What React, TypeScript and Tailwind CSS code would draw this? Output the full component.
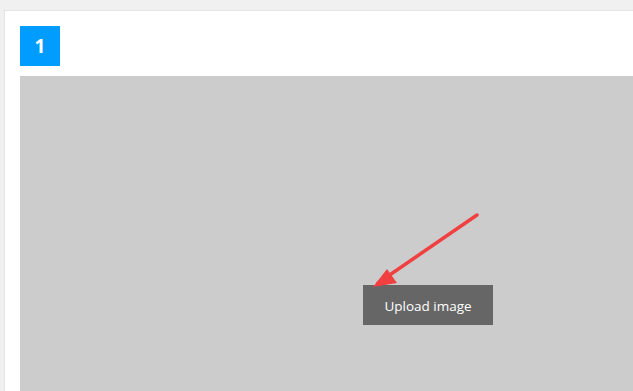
export default function App() {
  return (
    <div className="h-screen w-screen overflow-hidden bg-[#f0f0f0] pt-[10px] pl-[4px]" style={{ fontFamily: '"Open Sans", "Noto Sans", sans-serif' }}>
      <div className="w-[860px] border border-[#e3e3e3] bg-white p-[15px]">
        <div className="flex h-[40px] w-[40px] items-center justify-center bg-[#009cff] text-[19px] font-bold text-white">
          1
        </div>
        <div className="relative mt-[10px] flex h-[458px] w-[816px] items-center justify-center bg-[#cccccc]">
          <button className="h-[40px] w-[130px] bg-[#666666] pt-[3px] text-[13.5px] text-white">Upload image</button>
          <svg className="absolute left-0 top-0" width="816" height="458" viewBox="0 0 816 458">
            <line x1="457" y1="139" x2="358" y2="207" stroke="#f04040" strokeWidth="3.5" strokeLinecap="round" />
            <polygon points="353,211 367,193 377,207" fill="#f04040" />
          </svg>
        </div>
      </div>
    </div>
  );
}
